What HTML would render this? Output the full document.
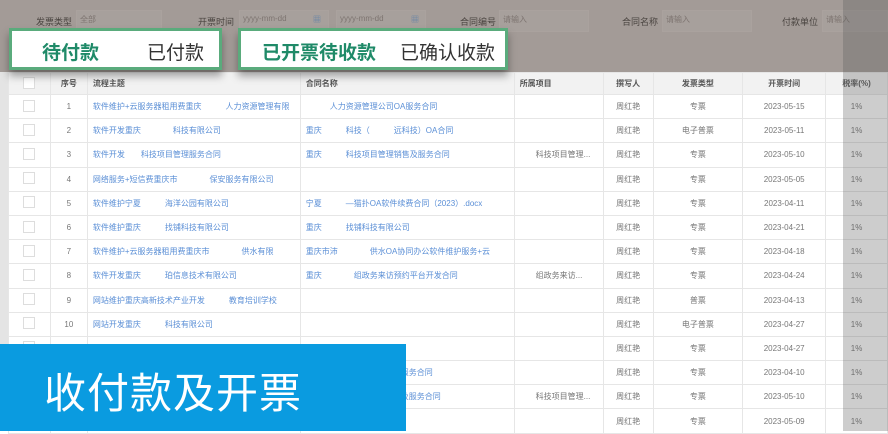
<!DOCTYPE html><html><head><meta charset="utf-8"><style>
*{margin:0;padding:0;box-sizing:border-box}
body{width:888px;height:431px;overflow:hidden;background:#fff;font-family:"Liberation Sans","Noto Sans CJK SC",sans-serif;position:relative}
.top{position:absolute;left:0;top:0;width:888px;height:72px;background:#a39b97}
.f{position:absolute;top:15px;font-size:9px;color:#4a4440}
.fp{position:absolute;top:14px;font-size:8px;color:#7d7470}
.box{position:absolute;top:10px;height:22px;border:1px solid #aaa29e;background:#a7a09c}
table{position:absolute;left:8px;top:72px;border-collapse:collapse;font-size:8px;color:#777}
td,th{border:1px solid #e6e6e6;height:24.2px;white-space:nowrap;overflow:hidden;padding:0 5px}
th{background:#f2f2f2;color:#555;font-weight:bold;height:22px;text-align:left}
.c{text-align:center}
a{color:#5b8fd6}
.cb{display:inline-block;width:12px;height:12px;border:1px solid #ddd;background:#fff}
.strip{position:absolute;left:843px;top:0;width:45px;height:431px;background:rgba(90,90,90,.3)}
.left{position:absolute;left:0;top:72px;width:8px;height:359px;background:#e4e4e4}
.g{position:absolute;top:28px;height:42px;background:#fff;border:3px solid #5aab7c;box-shadow:0 6px 8px rgba(0,0,0,.35);font-size:19px}
.g b{position:absolute;top:7px;color:#1f8a68}
.g span{position:absolute;top:7px;color:#333}
.blue{position:absolute;left:0;top:344px;width:406px;height:87px;background:#0a9be0;color:#fff;font-size:42px;padding:16px 0 0 44px;letter-spacing:1px}
</style></head><body>
<div class="top">
<div class="box" style="left:76px;width:86px"></div>
<div class="box" style="left:239px;width:90px"></div>
<div class="box" style="left:336px;width:90px"></div>
<div class="box" style="left:499px;width:90px"></div>
<div class="box" style="left:662px;width:90px"></div>
<div class="box" style="left:822px;width:66px"></div>
<span class="f" style="left:36px">发票类型</span><span class="fp" style="left:80px">全部</span>
<span class="f" style="left:198px">开票时间</span><span class="fp" style="left:243px">yyyy-mm-dd</span><span class="fp" style="left:340px">yyyy-mm-dd</span>
<span class="fp" style="left:313px;color:#5b7fa8">▦</span><span class="fp" style="left:411px;color:#5b7fa8">▦</span>
<span class="f" style="left:460px">合同编号</span><span class="fp" style="left:503px">请输入</span>
<span class="f" style="left:622px">合同名称</span><span class="fp" style="left:666px">请输入</span>
<span class="f" style="left:782px">付款单位</span><span class="fp" style="left:826px">请输入</span>
</div>
<div class="left"></div>
<table>
<colgroup><col style="width:42px"><col style="width:37px"><col style="width:213px"><col style="width:214px"><col style="width:89px"><col style="width:50px"><col style="width:90px"><col style="width:83px"><col style="width:62px"></colgroup>
<tr><th class="c"><span class="cb"></span></th><th class="c">序号</th><th>流程主题</th><th>合同名称</th><th>所属项目</th><th class="c">撰写人</th><th class="c">发票类型</th><th class="c">开票时间</th><th class="c">税率(%)</th></tr>
<tr><td class="c"><span class="cb"></span></td><td class="c">1</td><td><a>软件维护+云服务器租用费重庆　　　人力资源管理有限</a></td><td><a>　　　人力资源管理公司OA服务合同</a></td><td></td><td class="c">周红艳</td><td class="c">专票</td><td class="c">2023-05-15</td><td class="c">1%</td></tr>
<tr><td class="c"><span class="cb"></span></td><td class="c">2</td><td><a>软件开发重庆　　　　科技有限公司</a></td><td><a>重庆　　　科技（　　　远科技）OA合同</a></td><td></td><td class="c">周红艳</td><td class="c">电子普票</td><td class="c">2023-05-11</td><td class="c">1%</td></tr>
<tr><td class="c"><span class="cb"></span></td><td class="c">3</td><td><a>软件开发　　科技项目管理服务合同</a></td><td><a>重庆　　　科技项目管理销售及服务合同</a></td><td>　　科技项目管理...</td><td class="c">周红艳</td><td class="c">专票</td><td class="c">2023-05-10</td><td class="c">1%</td></tr>
<tr><td class="c"><span class="cb"></span></td><td class="c">4</td><td><a>网络服务+短信费重庆市　　　　保安服务有限公司</a></td><td></td><td></td><td class="c">周红艳</td><td class="c">专票</td><td class="c">2023-05-05</td><td class="c">1%</td></tr>
<tr><td class="c"><span class="cb"></span></td><td class="c">5</td><td><a>软件维护宁夏　　　海洋公园有限公司</a></td><td><a>宁夏　　　—猫扑OA软件续费合同（2023）.docx</a></td><td></td><td class="c">周红艳</td><td class="c">专票</td><td class="c">2023-04-11</td><td class="c">1%</td></tr>
<tr><td class="c"><span class="cb"></span></td><td class="c">6</td><td><a>软件维护重庆　　　找铺科技有限公司</a></td><td><a>重庆　　　找铺科技有限公司</a></td><td></td><td class="c">周红艳</td><td class="c">专票</td><td class="c">2023-04-21</td><td class="c">1%</td></tr>
<tr><td class="c"><span class="cb"></span></td><td class="c">7</td><td><a>软件维护+云服务器租用费重庆市　　　　供水有限</a></td><td><a>重庆市沛　　　　供水OA协同办公软件维护服务+云</a></td><td></td><td class="c">周红艳</td><td class="c">专票</td><td class="c">2023-04-18</td><td class="c">1%</td></tr>
<tr><td class="c"><span class="cb"></span></td><td class="c">8</td><td><a>软件开发重庆　　　珀信息技术有限公司</a></td><td><a>重庆　　　　组政务来访预约平台开发合同</a></td><td>　　组政务来访...</td><td class="c">周红艳</td><td class="c">专票</td><td class="c">2023-04-24</td><td class="c">1%</td></tr>
<tr><td class="c"><span class="cb"></span></td><td class="c">9</td><td><a>网站维护重庆高新技术产业开发　　　教育培训学校</a></td><td></td><td></td><td class="c">周红艳</td><td class="c">普票</td><td class="c">2023-04-13</td><td class="c">1%</td></tr>
<tr><td class="c"><span class="cb"></span></td><td class="c">10</td><td><a>网站开发重庆　　　科技有限公司</a></td><td></td><td></td><td class="c">周红艳</td><td class="c">电子普票</td><td class="c">2023-04-27</td><td class="c">1%</td></tr>
<tr><td class="c"><span class="cb"></span></td><td class="c">11</td><td></td><td></td><td></td><td class="c">周红艳</td><td class="c">专票</td><td class="c">2023-04-27</td><td class="c">1%</td></tr>
<tr><td class="c"><span class="cb"></span></td><td class="c">12</td><td></td><td style="padding-left:100px"><a>服务合同</a></td><td></td><td class="c">周红艳</td><td class="c">专票</td><td class="c">2023-04-10</td><td class="c">1%</td></tr>
<tr><td class="c"><span class="cb"></span></td><td class="c">13</td><td></td><td style="padding-left:100px"><a>及服务合同</a></td><td>　　科技项目管理...</td><td class="c">周红艳</td><td class="c">专票</td><td class="c">2023-05-10</td><td class="c">1%</td></tr>
<tr><td class="c"><span class="cb"></span></td><td class="c">14</td><td></td><td></td><td></td><td class="c">周红艳</td><td class="c">专票</td><td class="c">2023-05-09</td><td class="c">1%</td></tr>
</table>
<div class="strip"></div>
<div class="g" style="left:9px;width:213px"><b style="left:30px">待付款</b><span style="left:135px">已付款</span></div>
<div class="g" style="left:238px;width:270px"><b style="left:21px">已开票待收款</b><span style="left:159px">已确认收款</span></div>
<div class="blue">收付款及开票</div>
</body></html>
